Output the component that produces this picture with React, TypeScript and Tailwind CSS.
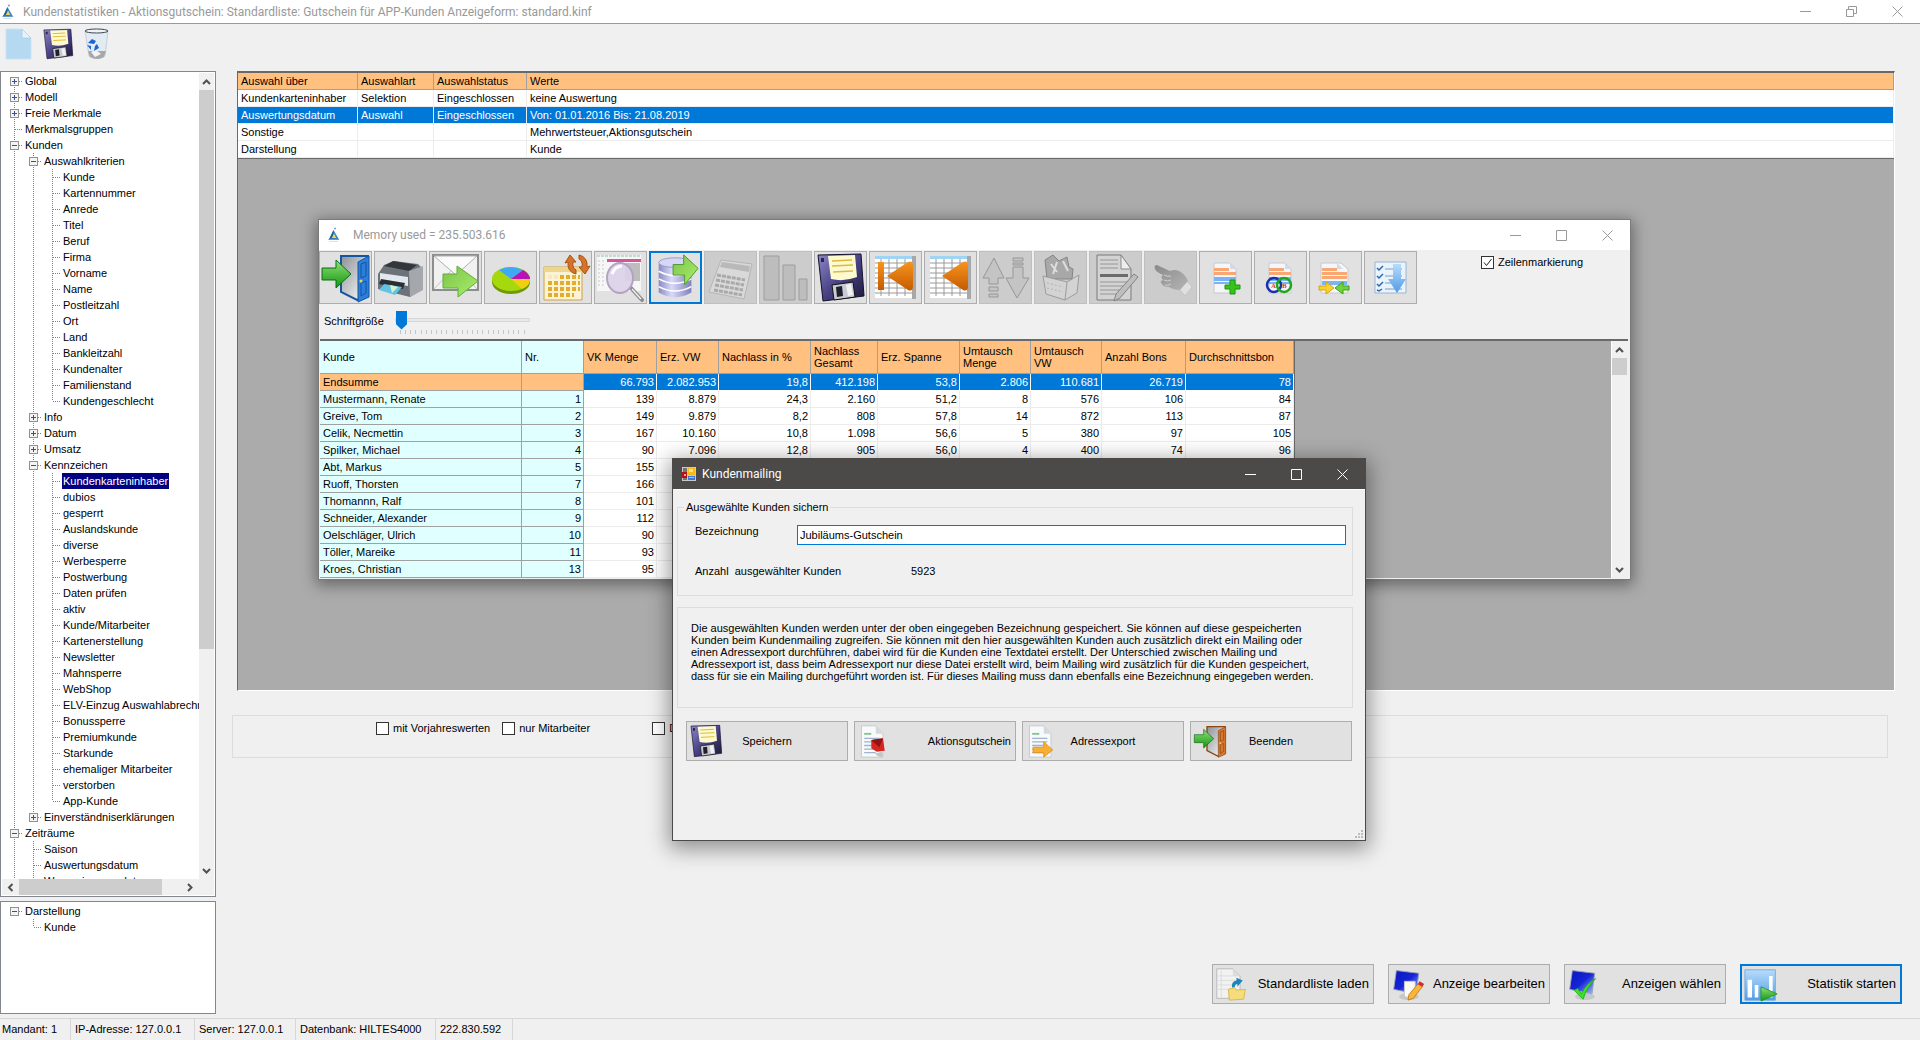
import { useState } from 'react';
import type { ReactNode } from 'react';

type Node = { label: string; open?: boolean; closed?: boolean; more?: boolean; children?: Node[] };

const leaves = (names: string[]): Node[] => names.map((label) => ({ label }));

const criteriaTree: Node[] = [
  { label: 'Global', closed: true },
  { label: 'Modell', closed: true },
  { label: 'Freie Merkmale', closed: true },
  { label: 'Merkmalsgruppen' },
  {
    label: 'Kunden',
    open: true,
    children: [
      {
        label: 'Auswahlkriterien',
        open: true,
        children: leaves([
          'Kunde', 'Kartennummer', 'Anrede', 'Titel', 'Beruf', 'Firma', 'Vorname', 'Name',
          'Postleitzahl', 'Ort', 'Land', 'Bankleitzahl', 'Kundenalter', 'Familienstand', 'Kundengeschlecht',
        ]),
      },
      { label: 'Info', closed: true },
      { label: 'Datum', closed: true },
      { label: 'Umsatz', closed: true },
      {
        label: 'Kennzeichen',
        open: true,
        children: leaves([
          'Kundenkarteninhaber', 'dubios', 'gesperrt', 'Auslandskunde', 'diverse', 'Werbesperre',
          'Postwerbung', 'Daten prüfen', 'aktiv', 'Kunde/Mitarbeiter', 'Kartenerstellung', 'Newsletter',
          'Mahnsperre', 'WebShop', 'ELV-Einzug Auswahlabrechnung', 'Bonussperre', 'Premiumkunde',
          'Starkunde', 'ehemaliger Mitarbeiter', 'verstorben', 'App-Kunde',
        ]),
      },
      { label: 'Einverständniserklärungen', closed: true },
    ],
  },
  {
    label: 'Zeiträume',
    open: true,
    more: true,
    children: leaves(['Saison', 'Auswertungsdatum', 'Wareneingangsdatum']),
  },
];

const displayTree: Node[] = [{ label: 'Darstellung', open: true, children: leaves(['Kunde']) }];

const selectionRows = [
  ['Kundenkarteninhaber', 'Selektion', 'Eingeschlossen', 'keine Auswertung'],
  ['Auswertungsdatum', 'Auswahl', 'Eingeschlossen', 'Von: 01.01.2016 Bis: 21.08.2019'],
  ['Sonstige', '', '', 'Mehrwertsteuer,Aktionsgutschein'],
  ['Darstellung', '', '', 'Kunde'],
];

const customerColumns = [
  'Kunde', 'Nr.', 'VK Menge', 'Erz. VW', 'Nachlass in %', 'Nachlass Gesamt',
  'Erz. Spanne', 'Umtausch Menge', 'Umtausch VW', 'Anzahl Bons', 'Durchschnittsbon',
];

const customerRows = [
  ['Endsumme', '', '66.793', '2.082.953', '19,8', '412.198', '53,8', '2.806', '110.681', '26.719', '78'],
  ['Mustermann, Renate', '1', '139', '8.879', '24,3', '2.160', '51,2', '8', '576', '106', '84'],
  ['Greive, Tom', '2', '149', '9.879', '8,2', '808', '57,8', '14', '872', '113', '87'],
  ['Celik, Necmettin', '3', '167', '10.160', '10,8', '1.098', '56,6', '5', '380', '97', '105'],
  ['Spilker, Michael', '4', '90', '7.096', '12,8', '905', '56,0', '4', '400', '74', '96'],
  ['Abt, Markus', '5', '155', '', '', '', '', '', '', '', ''],
  ['Ruoff, Thorsten', '7', '166', '', '', '', '', '', '', '', ''],
  ['Thomannn, Ralf', '8', '101', '', '', '', '', '', '', '', ''],
  ['Schneider, Alexander', '9', '112', '', '', '', '', '', '', '', ''],
  ['Oelschläger, Ulrich', '10', '90', '', '', '', '', '', '', '', ''],
  ['Töller, Mareike', '11', '93', '', '', '', '', '', '', '', ''],
  ['Kroes, Christian', '13', '95', '', '', '', '', '', '', '', ''],
];

/* ---------- icons ---------- */

const Gradients = () => (
  <svg className="absolute h-0 w-0" aria-hidden="true">
    <defs>
      <linearGradient id="green" x1="0" y1="0" x2="0" y2="1">
        <stop offset="0" stopColor="#8fe07a" />
        <stop offset="1" stopColor="#12960f" />
      </linearGradient>
      <linearGradient id="lime" x1="0" y1="0" x2="1" y2="1">
        <stop offset="0" stopColor="#7cc24a" />
        <stop offset="1" stopColor="#a8f06c" />
      </linearGradient>
      <linearGradient id="orange" x1="0" y1="0" x2="0" y2="1">
        <stop offset="0" stopColor="#f7941e" />
        <stop offset="1" stopColor="#c65a00" />
      </linearGradient>
      <linearGradient id="steel" x1="0" y1="0" x2="1" y2="1">
        <stop offset="0" stopColor="#8d9299" />
        <stop offset="1" stopColor="#ffffff" />
      </linearGradient>
      <linearGradient id="db" x1="0" y1="0" x2="1" y2="0">
        <stop offset="0" stopColor="#8a8ac4" />
        <stop offset="0.4" stopColor="#d9d9fb" />
        <stop offset="1" stopColor="#8080bd" />
      </linearGradient>
      <linearGradient id="disk" x1="0" y1="0" x2="1" y2="1">
        <stop offset="0" stopColor="#8d86c6" />
        <stop offset="0.5" stopColor="#4a4386" />
        <stop offset="1" stopColor="#1c1838" />
      </linearGradient>
      <linearGradient id="screen" x1="0" y1="0" x2="1" y2="1">
        <stop offset="0" stopColor="#0a18b8" />
        <stop offset="0.5" stopColor="#1524d8" />
        <stop offset="1" stopColor="#a9c4ff" />
      </linearGradient>
      <linearGradient id="sky" x1="0" y1="0" x2="0" y2="1">
        <stop offset="0" stopColor="#b8dcfa" />
        <stop offset="1" stopColor="#4f9be8" />
      </linearGradient>
      <linearGradient id="hand" x1="0" y1="0" x2="1" y2="1">
        <stop offset="0" stopColor="#8a8a8a" />
        <stop offset="1" stopColor="#b4b4b4" />
      </linearGradient>
    </defs>
  </svg>
);

const Svg = ({ size = 51, box = 51, children }: { size?: number; box?: number; children: ReactNode }) => (
  <svg width={size} height={size} viewBox={`0 0 ${box} ${box}`} className="shrink-0" aria-hidden="true">
    {children}
  </svg>
);

const Logo = () => (
  <Svg size={16} box={16}>
    <path d="M7.500 3 3 12.500h10z" fill="#3a86c8" />
    <path d="M7.500 3 3 12.500l4.500-2z" fill="#1d5f9e" />
    <path d="m8 6.500-2.500 5h5z" fill="#e8d36a" />
    <path d="M1.500 12.500q6-3 12.500 0z" fill="#2a76b8" />
    <circle cx="9" cy="1.500" r="1" fill="#5aa7dc" />
    <path d="M3 14.500h9" stroke="#d5e6f2" />
  </Svg>
);

const FormIcon = () => (
  <Svg size={14} box={14}>
    <path d="M0 0h14v14H0z" fill="#c9c9c9" />
    <path d="M1 1h4v4H1zM1 11h4v2H1z" fill="#77736e" />
    <path d="M6 1h7v7H6z" fill="#f6b91c" />
    <path d="M7 2h4v3H7z" fill="#fde28a" />
    <path d="M0 5h5v6H0z" fill="#b31412" />
    <path d="M2 7h2v2H2z" fill="#f4a09c" />
    <path d="M6 9h7v4H6z" fill="#3b76e0" />
    <path d="M7 10h5v1H7z" fill="#a8c6fa" />
  </Svg>
);

const Floppy = () => (
  <>
    <path d="M3 3 46 2l3 42-41 5z" fill="url(#disk)" stroke="#14112b" />
    <path d="m13 4 27-1 2 22q-13 5-26 2z" fill="#fdfad0" />
    <path d="m17 9 20-1M17 14l21-1M18 20l20-1" stroke="#e0b93c" strokeWidth="1.500" />
    <path d="m17 33 21-3 2 15-21 3z" fill="#c9cbd4" stroke="#111" />
    <path d="m21 35 6-1 1 10-6 1z" fill="#20202c" />
    <path d="m31 33 5-1 2 11-5 1z" fill="#f2f2f6" />
    <path d="M6 6h3v4H6z" fill="#2a2550" />
  </>
);

const DoorOpen = ({ color, dark }: { color: string; dark: string }) => (
  <>
    <path d="M21 4h27v40L37 48l-16-8z" fill="url(#steel)" stroke={dark} strokeWidth="2" />
    <path d="m38 10 11-6v41l-11 5z" fill={color} stroke={dark} />
    <path d="m41 12 5-2v14l-5 2zM41 31l5-2v12l-5 3z" fill="none" stroke={dark} />
    <circle cx="41" cy="29" r="1.500" fill="#f2d24a" />
    <path d="M2 16h14V8l15 14-15 14v-8H2z" fill="url(#green)" stroke="#0f6b12" />
  </>
);

const Sheet = ({ x = 14, wide }: { x?: number; wide?: boolean }) => (
  <g transform={`translate(${x} 11)`}>
    <path d={wide ? 'M0 0h20l7 6v24H0z' : 'M0 0h16l6 6v24H0z'} fill="#f4f6fa" stroke="#c3c9d2" />
    <path d="M16 0v6h6z" fill="#d5dbe4" />
    <path d={wide ? 'M1 5h15v3H1zM1 9h25v3H1zM1 13h25v3H1z' : 'M0 5h15v3H0zM0 9h22v3H0z'} fill="#f9a873" />
    <path d={wide ? 'M1 18h25v4H1z' : 'M0 14h22v4H0zM0 19h22v2H0z'} fill="#7bb4f5" />
  </g>
);

const GridSheet = () => (
  <>
    <path d="M5 4h38v42H5z" fill="#fff" />
    <path d="M5 4h38v3H5z" fill="#9fd4f4" />
    <path d="M5 11h38M5 16h38M5 21h38M5 26h38M5 31h38M5 36h38M5 41h38M11 7v37M19 7v37M27 7v37M35 7v37" stroke="#9a9a9a" />
    <path d="M42 4h4v43h-4z" fill="#a8a8a8" />
  </>
);

const PaperPage = ({ children }: { children?: ReactNode }) => (
  <>
    <path d="M5 2h16l8 9v26H5z" fill="#f7f9fb" stroke="#c2c8ce" />
    <path d="M21 2v9h8z" fill="#d3d9df" />
    <path d="M8 11h8" stroke="#7fc48b" strokeWidth="2" />
    <path d="M8 16h17M8 20h17M8 24h17M8 28h17M8 32h13" stroke="#9fb3cc" strokeWidth="1.500" />
    {children}
  </>
);

const MonitorPic = ({ children }: { children?: ReactNode }) => (
  <>
    <ellipse cx="20" cy="33" rx="11" ry="4" fill="#c4c7cc" />
    <path d="m6 4 25 3-3 23-25-5z" fill="url(#screen)" stroke="#9aa3b5" />
    {children}
  </>
);

type Tool = { name: string; disabled?: boolean; focused?: boolean; art: ReactNode };

const tools: Tool[] = [
  { name: 'Beenden', art: <DoorOpen color="#2a7fdc" dark="#15549e" /> },
  {
    name: 'Drucken',
    art: (
      <>
        <path d="m9 13 10-4 24 3 5 5v20l-13 8L3 37V22z" fill="#6d7178" />
        <path d="m9 14 9-5 24 4-8 6z" fill="#33373d" />
        <path d="m34 19 14-5v24l-13 7z" fill="#a4a8ad" />
        <path d="m5 21 28 4v9L5 29z" fill="#e3e8ee" />
        <path d="m6 27 24 4-2 6-24-5z" fill="#2b2f35" />
        <path d="m9 32 18 3-7 8-16-5z" fill="#62c3e6" />
        <path d="m15 33 8 2-6 6z" fill="#d6f3c4" />
      </>
    ),
  },
  {
    name: 'Mailing',
    art: (
      <>
        <path d="M3 3h45v35H3z" fill="#f1f1f1" stroke="#8d8d8d" strokeWidth="2" />
        <path d="m4 4 22 19L47 4z" fill="#fbfbfb" stroke="#b0b0b0" />
        <path d="m4 37 17-18M47 37 30 19" stroke="#c6c6c6" />
        <path d="M13 22h14v-8l21 15-20 16v-9H13z" fill="url(#lime)" stroke="#5fae38" />
      </>
    ),
  },
  {
    name: 'Diagramm',
    art: (
      <>
        <ellipse cx="26" cy="30" rx="19" ry="12" fill="#6f9a00" />
        <ellipse cx="26" cy="27" rx="19" ry="12" fill="#a5d80d" />
        <path d="m26 27-12-9q12-6 24 0z" fill="#3fa9f5" />
        <path d="m26 27 12-9q7 4 7 9z" fill="#b813b8" />
        <path d="M26 27h19q0 7-8 10z" fill="#f0cf12" />
      </>
    ),
  },
  {
    name: 'Kalender',
    art: (
      <>
        <path d="M4 15h38v33H4z" fill="#fbf3d4" stroke="#c9a24a" />
        <path d="M4 15h38v5H4z" fill="#eed58c" />
        <path d="M8 25h32M8 31h32M8 37h32M8 43h26" stroke="#e2ad2c" strokeWidth="4" strokeDasharray="4 2" />
        <path d="M8 25h10" stroke="#f4e9c2" strokeWidth="4" strokeDasharray="4 2" />
        <path d="M36 22q-9-2-8-12l-3 1 5-8 6 7h-3q-1 6 3 8zM39 3q9 2 8 12l3-1-5 8-6-7h3q1-6-3-8z" fill="#d6732a" stroke="#a85312" />
      </>
    ),
  },
  {
    name: 'Vorschau',
    art: (
      <>
        <path d="M2 3h44v36H2z" fill="#f6f6f6" />
        <path d="M2 4h44" stroke="#86c79c" strokeDasharray="3 1" />
        <path d="M12 7h34v3H12z" fill="#d9539b" />
        <path d="M4 8v28M8 8v28" stroke="#c9c9c9" strokeDasharray="2 2" />
        <path d="M30 11h15v18H30z" fill="#bdbdbd" />
        <path d="m36 36 11 12" stroke="#8b8b8b" strokeWidth="4" strokeLinecap="round" />
        <path d="m37 37 9 10" stroke="#f0f0f0" strokeWidth="1.500" />
        <ellipse cx="25" cy="26" rx="13" ry="15" fill="#dcd2ea" fillOpacity="0.900" stroke="#b3a3c0" strokeWidth="2" />
        <path d="M17 22q3-8 10-8" fill="none" stroke="#fff" strokeWidth="3" />
      </>
    ),
  },
  {
    name: 'Kunden sichern',
    focused: true,
    art: (
      <>
        <path d="M8 11v30q17 10 34 0V11z" fill="url(#db)" />
        <ellipse cx="25" cy="10" rx="17" ry="5" fill="#d6d6f5" stroke="#9a9ace" />
        <path d="M8 19q17 9 34 0M8 27q17 9 34 0M8 35q17 9 34 0" fill="none" stroke="#fff" strokeWidth="1.500" />
        <path d="M23 12h11V2l15 14-14 17V23H23z" fill="url(#lime)" stroke="#4d9a2c" />
      </>
    ),
  },
  {
    name: 'Rechner',
    disabled: true,
    art: (
      <>
        <path d="m16 8 31 4-8 35-35-7z" fill="#d9d9d9" stroke="#b5b5b5" />
        <path d="m17 10 28 4-1 6-29-5z" fill="#b9b9b9" />
        <path d="m12 23 28 5M11 28l28 5M10 33l28 5M9 38l28 5" stroke="#a9a9a9" strokeWidth="3" strokeDasharray="4 1" />
      </>
    ),
  },
  {
    name: 'Balken',
    disabled: true,
    art: <path d="M4 4h15v44H4zM23 13h12v35H23zM39 27h8v21h-8z" fill="#bdbdbd" stroke="#9d9d9d" />,
  },
  { name: 'Speichern', art: <Floppy /> },
  {
    name: 'Zum Anfang',
    art: (
      <>
        <GridSheet />
        <path d="M8 10h6v28H8z" fill="url(#orange)" />
        <path d="M17 24 38 10q5-2 5 4v20q0 6-5 4z" fill="url(#orange)" />
      </>
    ),
  },
  {
    name: 'Zurück',
    art: (
      <>
        <GridSheet />
        <path d="M17 24 38 10q5-2 5 4v20q0 6-5 4z" fill="url(#orange)" />
      </>
    ),
  },
  {
    name: 'Sortieren',
    disabled: true,
    art: (
      <g fill="#c4c4c4" stroke="#979797">
        <path d="M14 6 3 26h6v6h9v-6h6zM9 35h9v4H9zM9 42h9v3H9z" />
        <path d="m37 46 12-20h-6V15H33v11h-7zM33 6h10v3H33zM33 11h10v2H33z" />
      </g>
    ),
  },
  {
    name: 'Warenkorb',
    disabled: true,
    art: (
      <>
        <path d="m10 8 8-5 6 6 8-4 2 10 4 2-1 10H12z" fill="#a8a8a8" stroke="#858585" />
        <path d="m16 12 6 8M22 10l-4 12M28 9l5 10" stroke="#dedede" strokeWidth="2" />
        <path d="m8 24 24 6 12-7-2 18-12 7-19-6z" fill="#d3d3d3" stroke="#9c9c9c" />
        <path d="m32 30-2 18" stroke="#9c9c9c" />
        <path d="m12 31 16 4M12 36l16 4" stroke="#b3b3b3" strokeDasharray="2 2" />
      </>
    ),
  },
  {
    name: 'Bearbeiten',
    disabled: true,
    art: (
      <>
        <path d="M7 3h24l10 14v31H7z" fill="#d3d3d3" stroke="#7b7b7b" />
        <path d="M31 3v14h10z" fill="#eee" stroke="#8b8b8b" />
        <path d="M10 8h18M10 12h18M10 16h18M10 30h27M10 34h27M10 38h27M10 42h20" stroke="#969696" />
        <path d="M10 22h28v3H10z" fill="#6b6b6b" />
        <path d="m44 22 4 3-18 21-6 3 2-7z" fill="#bebebe" stroke="#848484" />
      </>
    ),
  },
  {
    name: 'Auswählen',
    disabled: true,
    art: (
      <>
        <path d="m34 37 8-8 5 6-7 9z" fill="#e0e0e0" stroke="#c4c4c4" />
        <path d="M10 14q1-2 4 0l11 5q5-2 9 0 6 3 9 10l-8 9q-7 0-11-3-6 0-7-3-3-3 1-4-3-3 0-5-7-3-8-6-1-2 0-3z" fill="url(#hand)" />
        <path d="M19 23q3 2 7 1M19 28q3 2 7 0M20 33q3 1 6-1" fill="none" stroke="#cfcfcf" />
      </>
    ),
  },
  {
    name: 'Liste hinzufügen',
    art: (
      <>
        <Sheet />
        <path d="M30 28h5v5h5v4h-5v5h-5v-5h-5v-4h5z" fill="#37c41a" stroke="#1f9410" />
      </>
    ),
  },
  {
    name: 'Listen vergleichen',
    art: (
      <>
        <Sheet />
        <circle cx="19" cy="33" r="7" fill="none" stroke="#1a2fb0" strokeWidth="2.500" />
        <circle cx="29" cy="33" r="7" fill="none" stroke="#22a61c" strokeWidth="2.500" />
        <text x="16" y="36" fontSize="7" fontWeight="bold" fontFamily="Liberation Serif, serif" fill="#d63a1c">A</text>
        <text x="27" y="36" fontSize="7" fontWeight="bold" fontFamily="Liberation Serif, serif" fill="#d63a1c">B</text>
      </>
    ),
  },
  {
    name: 'Listen zusammenführen',
    art: (
      <>
        <Sheet x={11} wide />
        <path d="M9 34h7v-4l8 6-8 6v-4H9z" fill="#fbd02e" stroke="#d8a70d" />
        <path d="M39 34h-6v-4l-8 6 8 6v-4h6z" fill="#6ed43a" stroke="#3f9f1a" />
      </>
    ),
  },
  {
    name: 'Liste übernehmen',
    art: (
      <>
        <path d="M10 10h31v31H10z" fill="#e9f3fc" stroke="#9cb4cf" />
        <path d="M20 17h17M20 24h17M20 31h17M20 37h17" stroke="#b3c7dd" strokeWidth="2" />
        <path d="m12 16 2 2 4-4M12 24l2 2 4-4M12 32l2 2 4-4M12 38l2 1 3-2" fill="none" stroke="#2d67ad" strokeWidth="1.500" />
        <path d="M28 12h8v15h5l-9 14-9-14h5z" fill="url(#sky)" />
      </>
    ),
  },
];

const NewIcon = () => (
  <Svg size={32} box={32}>
    <path d="M2 1h16l9 9v21H2z" fill="#b4d9f1" stroke="#c9e4f5" />
    <path d="M18 1v9h9z" fill="#e3f2fb" stroke="#8fc0de" strokeWidth="0.500" />
  </Svg>
);

const BinIcon = () => (
  <Svg size={32} box={32}>
    <path d="M5 3h23l-3 25q-8 5-16 0z" fill="#dfe8f2" fillOpacity="0.800" stroke="#c6d0dc" />
    <ellipse cx="16.500" cy="3" rx="11.500" ry="2" fill="#eef3f8" stroke="#3d4854" />
    <path d="M8 23h18l-2 6q-7 4-14 0z" fill="#a6a8ab" />
    <path d="m11 24 5-2 5 4-6 3z" fill="#f4f4f4" />
    <path d="m8 15 4-4 4 2-2 3zM15 18l2-2 2 4-5 3zM7 17l4 1v4z" fill="#1c63d6" />
  </Svg>
);

/* ---------- small parts ---------- */

const Caption = ({ maximized }: { maximized?: boolean }) => (
  <div className="flex">
    <button aria-label="Minimieren" className="flex h-6 w-[46px] items-center justify-center">
      <svg width="11" height="11" fill="none" stroke="currentColor"><path d="M0 5.500h11" /></svg>
    </button>
    <button aria-label="Maximieren" className="flex h-6 w-[46px] items-center justify-center">
      <svg width="11" height="11" fill="none" stroke="currentColor">
        {maximized ? <path d="M.5 3.500h7v7h-7zM2.500 3V.5h8v7H8" /> : <path d="M.5.5h10v10H.5z" />}
      </svg>
    </button>
    <button aria-label="Schließen" className="flex h-6 w-[46px] items-center justify-center">
      <svg width="11" height="11" fill="none" stroke="currentColor"><path d="m.5.5 10 10m0-10-10 10" /></svg>
    </button>
  </div>
);

const Arrow = ({ dir }: { dir: 'up' | 'down' | 'left' | 'right' }) => {
  const paths = {
    up: 'M1 7 4.500 3.500 8 7',
    down: 'M1 3l3.500 3.500L8 3',
    left: 'M6.500 1 3 4.500 6.500 8',
    right: 'M3 1l3.500 3.500L3 8',
  };
  return (
    <span className="flex h-[17px] w-[15px] shrink-0 items-center justify-center">
      <svg width="9" height="9" fill="none" stroke="#505050" strokeWidth="2"><path d={paths[dir]} /></svg>
    </span>
  );
};

// Dotted guide line cell, with the +/- box for nodes that can be toggled
const Guide = ({ up, down, branch, box }: { up?: boolean; down?: boolean; branch?: boolean; box?: '+' | '-' }) => (
  <svg width="19" height="16" className="shrink-0" shapeRendering="crispEdges" aria-hidden="true">
    <g stroke="#808080" strokeDasharray="1 1">
      {up && <path d="M9.500 0v8" />}
      {down && <path d="M9.500 8v8" />}
      {branch && <path d="M10 8.500h7" />}
    </g>
    {box && (
      <>
        <rect x="5.500" y="4.500" width="8" height="8" fill="#f4f4f4" stroke="#919191" />
        <path d={box === '+' ? 'M7 8.500h5M9.500 6v5' : 'M7 8.500h5'} stroke="#3b4f94" />
      </>
    )}
  </svg>
);

const TreeRows = ({ nodes, trail = [], selected, onSelect }: {
  nodes: Node[];
  trail?: boolean[];
  selected?: string;
  onSelect?: (label: string) => void;
}) => (
  <ul>
    {nodes.map((node, i) => {
      const last = i === nodes.length - 1 && !node.more;
      const first = i === 0 && trail.length === 0;
      return (
        <li key={node.label}>
          <div className="flex h-4 items-center">
            {trail.map((line, n) => <Guide key={n} up={line} down={line} />)}
            <Guide up={!first} down={!last} branch box={node.open ? '-' : node.closed ? '+' : undefined} />
            <button
              onClick={() => onSelect?.(node.label)}
              className={
                selected === node.label
                  ? 'h-4 bg-[#000080] px-px leading-4 whitespace-nowrap text-white'
                  : 'h-4 px-px leading-4 whitespace-nowrap'
              }
            >
              {node.label}
            </button>
          </div>
          {node.children && (
            <TreeRows nodes={node.children} trail={[...trail, !last]} selected={selected} onSelect={onSelect} />
          )}
        </li>
      );
    })}
  </ul>
);

const Check = ({ label, defaultChecked }: { label: string; defaultChecked?: boolean }) => (
  <label className="flex items-center gap-1 leading-4 whitespace-nowrap">
    <span className="relative flex h-[13px] w-[13px]">
      <input
        type="checkbox"
        defaultChecked={defaultChecked}
        className="peer h-[13px] w-[13px] appearance-none border border-[#333333] bg-white"
      />
      <svg width="13" height="13" className="pointer-events-none absolute inset-0 hidden peer-checked:block" fill="none" stroke="#222">
        <path d="m3 6.500 2.500 3L10.500 3" />
      </svg>
    </span>
    {label}
  </label>
);

type ActionProps = { label: string; icon: ReactNode; large?: boolean; right?: boolean; focused?: boolean };

const ActionButton = ({ label, icon, large, right, focused }: ActionProps) => (
  <button
    className={`relative flex h-10 w-[162px] items-center bg-[#e1e1e1] ${
      focused ? 'border-2 border-[#0078d7]' : 'border border-[#adadad]'
    } ${large ? 'text-[13px]' : 'text-[11px]'} ${right ? 'justify-end pr-1' : 'justify-center'}`}
  >
    <span className="absolute top-[2px] left-[2px]">{icon}</span>
    {label}
  </button>
);

/* ---------- windows ---------- */

const StatisticsWindow = () => (
  <section className="absolute top-[219px] left-[318px] flex h-[361px] w-[1313px] flex-col border border-[#7a7a7a] bg-[#f0f0f0] shadow-[0_3px_14px_2px_rgba(0,0,0,0.4)]">
    <header className="flex h-[30px] shrink-0 items-center bg-white text-[#999999]">
      <div className="flex flex-1 items-center gap-[11px] pl-[7px] font-[Roboto,sans-serif] text-[12px]">
        <Logo />
        Memory used = 235.503.616
      </div>
      <Caption />
    </header>
    <div className="flex items-start pt-px pr-[47px]">
      <div className="flex flex-1 gap-[2px]">
        {tools.map((tool) => (
          <button
            key={tool.name}
            aria-label={tool.name}
            disabled={tool.disabled}
            className={`flex h-[53px] w-[53px] items-center justify-center ${
              tool.focused
                ? 'border-2 border-[#0078d7] bg-[#e1e1e1]'
                : tool.disabled
                  ? 'border border-[#bfbfbf] bg-[#cccccc]'
                  : 'border border-[#adadad] bg-[#e1e1e1]'
            }`}
          >
            <Svg size={tool.focused ? 49 : 51}>{tool.art}</Svg>
          </button>
        ))}
      </div>
      <div className="pt-[3px]">
        <Check label="Zeilenmarkierung" defaultChecked />
      </div>
    </div>
    <div className="flex h-[35px] items-center gap-[7px] pl-[5px]">
      <label htmlFor="fontsize" className="w-16">Schriftgröße</label>
      <div>
        <input
          id="fontsize"
          type="range"
          min={0}
          max={24}
          defaultValue={0}
          className="block h-5 w-[135px] appearance-none bg-transparent [&::-webkit-slider-runnable-track]:h-1 [&::-webkit-slider-runnable-track]:border [&::-webkit-slider-runnable-track]:border-[#d6d6d6] [&::-webkit-slider-runnable-track]:bg-[#e7eaea] [&::-webkit-slider-thumb]:-mt-2 [&::-webkit-slider-thumb]:h-[19px] [&::-webkit-slider-thumb]:w-[11px] [&::-webkit-slider-thumb]:appearance-none [&::-webkit-slider-thumb]:bg-[#0078d7] [&::-webkit-slider-thumb]:[clip-path:polygon(0_0,100%_0,100%_72%,50%_100%,0_72%)]"
        />
        <svg width="135" height="4" className="block" aria-hidden="true">
          {Array.from({ length: 25 }, (_, i) => (
            <path key={i} d={`M${5.5 + Math.round(i * 5.15)} 0v4`} stroke="#c4c4c4" />
          ))}
        </svg>
      </div>
    </div>
    <div className="mr-[2px] mb-px ml-px flex min-h-0 flex-1 border-t-2 border-t-[#696969] bg-[#ababab]">
      <div className="flex-1 overflow-hidden">
        <table className="w-[974px] table-fixed border-separate border-spacing-0 border-r border-[#696969] text-[11px]">
          <colgroup>
            <col className="w-[202px]" />
            <col className="w-[62px]" />
            <col className="w-[73px]" />
            <col className="w-[62px]" />
            <col className="w-[92px]" />
            <col className="w-[67px]" />
            <col className="w-[82px]" />
            <col className="w-[71px]" />
            <col className="w-[71px]" />
            <col className="w-[84px]" />
            <col className="w-[108px]" />
          </colgroup>
          <thead>
            <tr className="h-[33px]">
              {customerColumns.map((name, i) => (
                <th
                  key={name}
                  className={`border-r border-b border-[#a0a0a0] pl-[3px] text-left leading-3 font-normal ${
                    i < 2 ? 'bg-[#e0ffff]' : 'bg-[#ffc080]'
                  }`}
                >
                  {name}
                </th>
              ))}
            </tr>
          </thead>
          <tbody>
            {customerRows.map((row, r) => (
              <tr key={row[0]} className="h-[17px] leading-4">
                {row.map((value, c) => (
                  <td
                    key={c}
                    className={`border-r border-b py-0 ${c === 0 ? 'pl-[3px]' : 'pr-[2px] text-right'} ${
                      c < 2
                        ? r === 0
                          ? 'border-[#a0a0a0] bg-[#ffc080]'
                          : 'border-[#a0a0a0] bg-[#e0ffff]'
                        : r === 0
                          ? 'border-white bg-[#0078d7] text-white'
                          : 'border-[#ececec] bg-white'
                    }`}
                  >
                    {value}
                  </td>
                ))}
              </tr>
            ))}
          </tbody>
        </table>
      </div>
      <div className="flex w-[17px] flex-col border-l border-white bg-[#f0f0f0]">
        <Arrow dir="up" />
        <span className="h-[17px] w-[15px] bg-[#cdcdcd]" />
        <span className="flex-1" />
        <Arrow dir="down" />
      </div>
    </div>
  </section>
);

const MailingDialog = () => {
  const [title, setTitle] = useState('Jubiläums-Gutschein');

  return (
    <section
      role="dialog"
      aria-label="Kundenmailing"
      className="absolute top-[458px] left-[672px] flex h-[383px] w-[694px] flex-col border border-[#4c4a48] bg-[#f0f0f0] shadow-[0_5px_20px_3px_rgba(0,0,0,0.4)]"
    >
      <header className="flex h-[30px] shrink-0 items-center bg-[#4c4a48] text-white">
        <div className="flex flex-1 items-center gap-[6px] pl-[9px] font-[Roboto,sans-serif] text-[12px]">
          <FormIcon />
          Kundenmailing
        </div>
        <Caption />
      </header>
      <div className="flex flex-col border-t border-white pr-3 pl-1">
        <fieldset className="mt-[9px] h-[97px] border border-[#dcdcdc] pl-[6px]">
          <legend className="px-[2px] leading-4">Ausgewählte Kunden sichern</legend>
          <div className="flex items-start pt-2 pr-[6px] pl-[11px]">
            <label htmlFor="title" className="w-[102px] leading-4">Bezeichnung</label>
            <input
              id="title"
              value={title}
              onChange={(e) => setTitle(e.target.value)}
              className="mt-[2px] h-5 flex-1 border border-[#0078d7] bg-white px-[2px] outline-none"
            />
          </div>
          <div className="flex pt-[18px] pl-[11px] leading-4 whitespace-pre">
            <span className="w-[216px]">Anzahl  ausgewählter Kunden</span>
            <span>5923</span>
          </div>
        </fieldset>
        <div className="mt-[11px] h-[101px] border border-[#dcdcdc] px-[13px] pt-[14px]">
          <p className="leading-3 whitespace-nowrap">
            Die ausgewählten Kunden werden unter der oben eingegeben Bezeichnung gespeichert. Sie können auf diese gespeicherten<br />
            Kunden beim Kundenmailing zugreifen. Sie können mit den hier ausgewählten Kunden auch zusätzlich direkt ein Mailing oder<br />
            einen Adressexport durchführen, dabei wird für die Kunden eine Textdatei erstellt. Der Unterschied zwischen Mailing und<br />
            Adressexport ist, dass beim Adressexport nur diese Datei erstellt wird, beim Mailing wird zusätzlich für die Kunden gespeichert,<br />
            dass für sie ein Mailing durchgeführt worden ist. Für dieses Mailing muss dann ebenfalls eine Bezeichnung eingegeben werden.
          </p>
        </div>
        <div className="mt-[13px] flex gap-[6px] pl-[9px]">
          <ActionButton label="Speichern" icon={<Svg size={34}><Floppy /></Svg>} />
          <ActionButton
            label="Aktionsgutschein"
            right
            icon={
              <Svg size={34} box={38}>
                <PaperPage>
                  <path d="m16 18 13-2 2 14-9 1-6-4z" fill="#d3271f" />
                  <path d="m16 18 13-2-4 10z" fill="#8f1512" />
                  <path d="m20 33 8-2 1 5q-5 2-9-3z" fill="#c4c4c4" />
                </PaperPage>
              </Svg>
            }
          />
          <ActionButton
            label="Adressexport"
            icon={
              <Svg size={34} box={38}>
                <PaperPage>
                  <path d="M9 26h12v-6l10 9-10 8v-5H9z" fill="#f7ae32" stroke="#e0921a" />
                </PaperPage>
              </Svg>
            }
          />
          <ActionButton label="Beenden" icon={<Svg size={34}><DoorOpen color="#d9772e" dark="#8a4513" /></Svg>} />
        </div>
      </div>
      <svg width="12" height="12" className="absolute right-0 bottom-0" fill="#bdbdbd" aria-hidden="true">
        <path d="M8 2h2v2H8zM5 5h2v2H5zM8 5h2v2H8zM2 8h2v2H2zM5 8h2v2H5zM8 8h2v2H8z" />
      </svg>
    </section>
  );
};

const App = () => {
  const [selected, setSelected] = useState('Kundenkarteninhaber');

  return (
    <div className="relative flex h-screen flex-col overflow-hidden bg-[#f0f0f0] font-['Liberation_Sans',Arial,sans-serif] text-[11px] text-black">
      <Gradients />
      <header className="flex h-6 shrink-0 items-center border-b border-[#9a9a9a] bg-white text-[#999999]">
        <div className="flex flex-1 items-center gap-[7px] font-[Roboto,sans-serif] text-[12px]">
          <Logo />
          Kundenstatistiken - Aktionsgutschein: Standardliste: Gutschein für APP-Kunden Anzeigeform: standard.kinf
        </div>
        <Caption maximized />
      </header>

      <nav className="flex h-[47px] shrink-0 items-start gap-[6px] pt-1 pl-1">
        <button aria-label="Neu"><NewIcon /></button>
        <button aria-label="Speichern"><Svg size={32}><Floppy /></Svg></button>
        <button aria-label="Löschen"><BinIcon /></button>
      </nav>

      <div className="flex min-h-0 flex-1">
        <aside className="flex w-[216px] shrink-0 flex-col gap-1 pb-1">
          <div className="flex min-h-0 flex-1 flex-col border border-[#828790] bg-white p-px">
            <div className="flex min-h-0 flex-1">
              <div className="flex-1 overflow-hidden pl-[3px]">
                <TreeRows nodes={criteriaTree} selected={selected} onSelect={setSelected} />
              </div>
              <div className="flex w-[15px] flex-col bg-[#f0f0f0]">
                <Arrow dir="up" />
                <span className="h-[559px] bg-[#cdcdcd]" />
                <span className="flex-1" />
                <Arrow dir="down" />
              </div>
            </div>
            <div className="flex h-4 items-center bg-[#f0f0f0] pr-[17px] pl-px">
              <Arrow dir="left" />
              <span className="ml-px h-4 w-[143px] bg-[#cdcdcd]" />
              <span className="flex-1" />
              <Arrow dir="right" />
            </div>
          </div>
          <div className="h-[113px] shrink-0 border border-[#828790] bg-white py-px pl-1">
            <TreeRows nodes={displayTree} />
          </div>
        </aside>

        <main className="flex min-w-0 flex-1 flex-col pr-[18px] pb-[14px] pl-4">
          <div className="mr-[7px] ml-[5px] min-h-0 flex-1 border border-t-2 border-t-[#696969] border-r-white border-b-white border-l-[#696969] bg-[#ababab]">
            <table className="w-full table-fixed border-separate border-spacing-0 border-b border-[#696969]">
              <colgroup>
                <col className="w-[120px]" />
                <col className="w-[76px]" />
                <col className="w-[93px]" />
                <col />
              </colgroup>
              <thead>
                <tr className="h-[17px] bg-[#ffc080] text-left leading-4">
                  {['Auswahl über', 'Auswahlart', 'Auswahlstatus', 'Werte'].map((name) => (
                    <th key={name} className="border-r border-b border-[#a0a0a0] py-0 pl-[3px] font-normal">{name}</th>
                  ))}
                </tr>
              </thead>
              <tbody>
                {selectionRows.map((row, r) => (
                  <tr key={row[0]} className={`h-[17px] leading-4 ${r === 1 ? 'bg-[#0078d7] text-white' : 'bg-white'}`}>
                    {row.map((value, c) => (
                      <td key={c} className="border-r border-b border-[#ececec] py-0 pl-[3px]">{value}</td>
                    ))}
                  </tr>
                ))}
              </tbody>
            </table>
          </div>
          <div className="mt-6 mr-[14px] flex h-[43px] shrink-0 items-start gap-3 border border-[#dcdcdc] pt-1 pl-[143px]">
            <Check label="mit Vorjahreswerten" />
            <div className="w-[138px]"><Check label="nur Mitarbeiter" /></div>
            <Check label="Durchschnittswerte" />
          </div>
          <div className="mt-[206px] flex shrink-0 justify-end gap-[14px]">
            <ActionButton
              label="Standardliste laden"
              large
              right
              icon={
                <Svg size={34} box={38}>
                  <path d="M2 2h18l8 8v25H2z" fill="#f2f2f2" stroke="#b5b5b5" />
                  <path d="M20 2v8h8z" fill="#dcdcdc" />
                  <path d="M7 4v30M2 10h24M2 15h24M2 20h24M2 25h24" stroke="#dadada" />
                  <path d="M19 23q-1-7 5-8v-3l7 3-6 7v-3q-3 0-3 4z" fill="#1d86b8" />
                  <path d="m15 25 7-2 2 3 10-1-2 11-16 1z" fill="#f7dc7b" stroke="#d9b544" />
                </Svg>
              }
            />
            <ActionButton
              label="Anzeige bearbeiten"
              large
              right
              icon={
                <Svg size={34} box={38}>
                  <MonitorPic>
                    <path d="M15 16h12v17q-7 2-12 0z" fill="#fbfbf4" stroke="#c9c9c9" />
                    <path d="m30 19 5 3-10 13-6 2 1-6z" fill="#f8b63c" stroke="#c07a12" />
                    <path d="m30 19 2-3 5 3-2 3z" fill="#d62a2a" />
                  </MonitorPic>
                </Svg>
              }
            />
            <ActionButton
              label="Anzeigen wählen"
              large
              right
              icon={
                <Svg size={34} box={38}>
                  <MonitorPic>
                    <path d="m8 26 4-2 4 6q6-12 16-17-10 9-14 23z" fill="#3ee02a" stroke="#1fae12" />
                  </MonitorPic>
                </Svg>
              }
            />
            <ActionButton
              label="Statistik starten"
              large
              right
              focused
              icon={
                <Svg size={34} box={38}>
                  <path d="M1 2h34v34H1z" fill="url(#sky)" stroke="#6fa8e0" />
                  <path d="M4 13h5v20H4zM12 19h4v14h-4zM20 23h4v10h-4zM28 9h4v24h-4z" fill="#fff" />
                  <path d="m19 21 18 8-18 8z" fill="url(#green)" stroke="#1f9a12" />
                </Svg>
              }
            />
          </div>
        </main>
      </div>

      <footer className="flex h-[22px] shrink-0 items-stretch border-t border-[#d7d7d7] leading-5 whitespace-nowrap">
        <span className="w-[71px] border-r border-[#d7d7d7] pl-[2px]">Mandant: 1</span>
        <span className="w-[124px] border-r border-[#d7d7d7] pl-1">IP-Adresse: 127.0.0.1</span>
        <span className="w-[101px] border-r border-[#d7d7d7] pl-1">Server: 127.0.0.1</span>
        <span className="w-[140px] border-r border-[#d7d7d7] pl-1">Datenbank: HILTES4000</span>
        <span className="w-[77px] border-r border-[#d7d7d7] pl-1">222.830.592</span>
      </footer>

      <StatisticsWindow />
      <MailingDialog />
    </div>
  );
};

export default App;
